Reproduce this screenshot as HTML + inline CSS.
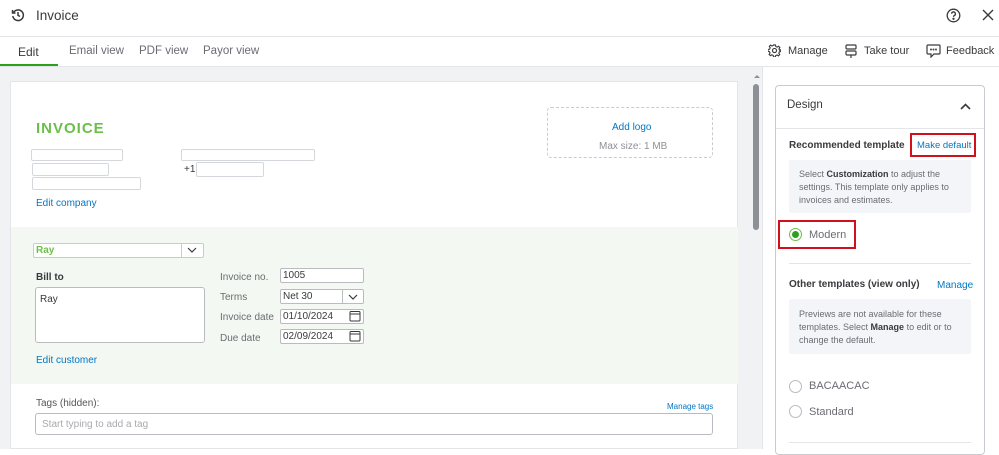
<!DOCTYPE html>
<html><head><style>
*{box-sizing:border-box;margin:0;padding:0}
body{width:999px;height:449px;overflow:hidden;background:#fff;font-family:"Liberation Sans",sans-serif;position:relative;color:#393a3d}
.a{position:absolute}
.in{position:absolute;border:1px solid #d4d7dc;background:#fff;border-radius:2px}
.lbl{position:absolute;font-size:10px;color:#6b6c72}
.link{color:#0077c5}
</style></head><body>
<svg class="a" style="left:11px;top:8px" width="14" height="14" viewBox="0 0 14 14" fill="none" stroke="#393a3d" stroke-width="1.5"><path d="M2.5 4.5A5.3 5.3 0 1 1 1.8 8"/><path d="M1.5 2v3h3"/><path d="M7 4v3.3l2 1.2"/></svg>
<div class="a" style="left:36px;top:8px;font-size:13.5px;color:#393a3d">Invoice</div>
<svg class="a" style="left:946px;top:8px" width="15" height="15" viewBox="0 0 15 15" fill="none" stroke="#393a3d" stroke-width="1.3"><circle cx="7.5" cy="7.5" r="6.3"/><path d="M5.6 5.8a1.9 1.9 0 1 1 2.6 1.8c-.6.3-.7.7-.7 1.3"/><circle cx="7.5" cy="10.8" r=".5" fill="#393a3d"/></svg>
<svg class="a" style="left:982px;top:9px" width="12" height="12" viewBox="0 0 12 12" stroke="#393a3d" stroke-width="1.4"><path d="M1 1l10 10M11 1L1 11"/></svg>
<div class="a" style="left:0;top:36px;width:999px;height:1px;background:#e3e5e8"></div>
<div class="a" style="left:18px;top:45px;font-size:12px;color:#393a3d">Edit</div>
<div class="a" style="left:69px;top:45px;font-size:11.5px;color:#6b6c72">Email view</div>
<div class="a" style="left:139px;top:45px;font-size:11.5px;color:#6b6c72">PDF view</div>
<div class="a" style="left:203px;top:45px;font-size:11.5px;color:#6b6c72">Payor view</div>
<div class="a" style="left:0;top:64px;width:58px;height:2px;background:#2ca01c"></div>
<svg class="a" style="left:768px;top:44px" width="13" height="13" viewBox="0 0 14 14" fill="none" stroke="#393a3d" stroke-width="1.2"><circle cx="7" cy="7" r="2.2"/><path d="M6 1h2l.4 1.7 1.5.7 1.5-1 1.4 1.4-1 1.5.7 1.5L14 6v2l-1.7.4-.7 1.5 1 1.5-1.4 1.4-1.5-1-1.5.7L8 14H6l-.4-1.7-1.5-.7-1.5 1-1.4-1.4 1-1.5-.7-1.5L0 8V6l1.7-.4.7-1.5-1-1.5 1.4-1.4 1.5 1 1.5-.7z"/></svg>
<div class="a" style="left:788px;top:45px;font-size:11px">Manage</div>
<svg class="a" style="left:845px;top:44px" width="12" height="14" viewBox="0 0 12 14" fill="none" stroke="#393a3d" stroke-width="1.2"><rect x="1" y="1" width="10" height="4" rx="1"/><rect x="1" y="7" width="10" height="4" rx="1"/><path d="M6 11v3"/></svg>
<div class="a" style="left:864px;top:45px;font-size:11px">Take tour</div>
<svg class="a" style="left:926px;top:44px" width="15" height="14" viewBox="0 0 15 14" fill="none" stroke="#393a3d" stroke-width="1.2"><path d="M2 1h11a1 1 0 0 1 1 1v7a1 1 0 0 1-1 1H8l-3 3v-3H2a1 1 0 0 1-1-1V2a1 1 0 0 1 1-1z"/><circle cx="5" cy="5.5" r=".4"/><circle cx="7.5" cy="5.5" r=".4"/><circle cx="10" cy="5.5" r=".4"/></svg>
<div class="a" style="left:946px;top:45px;font-size:11px">Feedback</div>
<div class="a" style="left:0;top:66px;width:999px;height:1px;background:#e3e5e8"></div>
<div class="a" style="left:0;top:67px;width:762px;height:382px;background:#f1f2f4"></div>
<div class="a" style="left:10px;top:81px;width:728px;height:368px;background:#fff;border:1px solid #e3e5e8"></div>
<div class="a" style="left:753px;top:84px;width:6px;height:146px;background:#8d9096;border-radius:3px"></div>
<div class="a" style="left:754px;top:75px;width:0;height:0;border-left:3px solid transparent;border-right:3px solid transparent;border-bottom:3px solid #8d9096"></div>
<div class="a" style="left:36px;top:120px;font-size:15px;font-weight:bold;color:#6cbf4a;letter-spacing:1px">INVOICE</div>
<div class="in" style="left:31px;top:149px;width:92px;height:12px"></div>
<div class="in" style="left:32px;top:163px;width:77px;height:13px"></div>
<div class="in" style="left:32px;top:177px;width:109px;height:13px"></div>
<div class="in" style="left:181px;top:149px;width:134px;height:12px"></div>
<div class="a" style="left:184px;top:164px;font-size:10px">+1</div>
<div class="in" style="left:196px;top:162px;width:68px;height:15px"></div>
<div class="a link" style="left:36px;top:198px;font-size:10px">Edit company</div>
<div class="a" style="left:547px;top:107px;width:166px;height:51px;border:1px dashed #c9cbd0;border-radius:4px"></div>
<div class="a link" style="left:612px;top:122px;font-size:10px">Add logo</div>
<div class="a" style="left:599px;top:141px;font-size:10px;color:#8d9096">Max size: 1 MB</div>
<div class="a" style="left:11px;top:227px;width:727px;height:157px;background:#f4f8f2"></div>
<div class="in" style="left:33px;top:243px;width:171px;height:15px;border-color:#c9cbd0"></div>
<div class="a" style="left:36px;top:245px;font-size:10px;font-weight:bold;color:#6cbf4a">Ray</div>
<div class="a" style="left:181px;top:243px;width:1px;height:15px;background:#c9cbd0"></div>
<svg class="a" style="left:187px;top:247px" width="10" height="6" viewBox="0 0 10 6" fill="none" stroke="#393a3d" stroke-width="1.2"><path d="M1 1l4 4 4-4"/></svg>
<div class="a" style="left:36px;top:272px;font-size:10px;font-weight:bold">Bill to</div>
<div class="in" style="left:35px;top:287px;width:170px;height:56px;border-color:#b9bbc0;border-radius:3px"></div>
<div class="a" style="left:40px;top:294px;font-size:10px">Ray</div>
<div class="a link" style="left:36px;top:355px;font-size:10px">Edit customer</div>
<div class="lbl" style="left:220px;top:272px">Invoice no.</div>
<div class="lbl" style="left:220px;top:292px">Terms</div>
<div class="lbl" style="left:220px;top:312px">Invoice date</div>
<div class="lbl" style="left:220px;top:333px">Due date</div>
<div class="in" style="left:280px;top:268px;width:84px;height:15px;border-color:#b9bbc0"></div>
<div class="a" style="left:283px;top:270px;font-size:10px">1005</div>
<div class="in" style="left:280px;top:289px;width:84px;height:15px;border-color:#b9bbc0"></div>
<div class="a" style="left:283px;top:291px;font-size:10px">Net 30</div>
<div class="a" style="left:342px;top:289px;width:1px;height:15px;background:#b9bbc0"></div>
<svg class="a" style="left:348px;top:294px" width="10" height="6" viewBox="0 0 10 6" fill="none" stroke="#393a3d" stroke-width="1.2"><path d="M1 1l4 4 4-4"/></svg>
<div class="in" style="left:280px;top:309px;width:84px;height:15px;border-color:#b9bbc0"></div>
<div class="a" style="left:283px;top:311px;font-size:10px">01/10/2024</div>
<div class="in" style="left:280px;top:329px;width:84px;height:15px;border-color:#b9bbc0"></div>
<div class="a" style="left:283px;top:331px;font-size:10px">02/09/2024</div>
<svg class="a" style="left:349px;top:310px" width="12" height="12" viewBox="0 0 12 12" fill="none" stroke="#393a3d" stroke-width="1"><rect x="1" y="1.5" width="10" height="9.5" rx="1"/><path d="M1 4h10"/></svg>
<svg class="a" style="left:349px;top:330px" width="12" height="12" viewBox="0 0 12 12" fill="none" stroke="#393a3d" stroke-width="1"><rect x="1" y="1.5" width="10" height="9.5" rx="1"/><path d="M1 4h10"/></svg>
<div class="lbl" style="left:36px;top:398px;color:#555">Tags (hidden):</div>
<div class="a link" style="left:667px;top:402px;font-size:8px">Manage tags</div>
<div class="in" style="left:35px;top:413px;width:678px;height:22px;border-color:#b9bbc0;border-radius:3px"></div>
<div class="a" style="left:42px;top:419px;font-size:10px;color:#a8aaae">Start typing to add a tag</div>
<div class="a" style="left:762px;top:67px;width:237px;height:382px;background:#fff;border-left:1px solid #e3e5e8"></div>
<div class="a" style="left:775px;top:85px;width:210px;height:370px;border:1px solid #c9cbd0;border-radius:4px"></div>
<div class="a" style="left:787px;top:99px;font-size:11.5px;color:#393a3d">Design</div>
<svg class="a" style="left:960px;top:103px" width="11" height="7" viewBox="0 0 11 7" fill="none" stroke="#393a3d" stroke-width="1.6"><path d="M1 6l4.5-4.5L10 6"/></svg>
<div class="a" style="left:776px;top:128px;width:208px;height:1px;background:#e3e5e8"></div>
<div class="a" style="left:789px;top:140px;font-size:10px;font-weight:bold;color:#393a3d">Recommended template</div>
<div class="a" style="left:910px;top:133px;width:66px;height:24px;border:2px solid #d0101a"></div>
<div class="a link" style="left:917px;top:140px;font-size:9.5px">Make default</div>
<div class="a" style="left:789px;top:160px;width:182px;height:53px;background:#f4f5f8;border-radius:2px"></div>
<div class="a" style="left:799px;top:168px;font-size:9px;line-height:13px;color:#6b6c72;width:170px">Select <b style="color:#393a3d">Customization</b> to adjust the settings. This template only applies to invoices and estimates.</div>
<div class="a" style="left:778px;top:220px;width:78px;height:29px;border:2px solid #d0101a"></div>
<div class="a" style="left:789px;top:228px;width:13px;height:13px;border:1px solid #6cbf4a;border-radius:50%;background:#fff"></div>
<div class="a" style="left:792px;top:231px;width:7px;height:7px;border-radius:50%;background:#2ca01c"></div>
<div class="a" style="left:809px;top:229px;font-size:11px;color:#6b6c72">Modern</div>
<div class="a" style="left:789px;top:263px;width:182px;height:1px;background:#e3e5e8"></div>
<div class="a" style="left:789px;top:279px;font-size:10px;font-weight:bold">Other templates (view only)</div>
<div class="a link" style="left:937px;top:280px;font-size:10px">Manage</div>
<div class="a" style="left:789px;top:299px;width:182px;height:55px;background:#f4f5f8;border-radius:2px"></div>
<div class="a" style="left:799px;top:308px;font-size:9px;line-height:13px;color:#6b6c72;width:170px">Previews are not available for these templates. Select <b style="color:#393a3d">Manage</b> to edit or to change the default.</div>
<div class="a" style="left:789px;top:380px;width:13px;height:13px;border:1px solid #b9bbc0;border-radius:50%"></div>
<div class="a" style="left:809px;top:380px;font-size:11px;color:#6b6c72">BACAACAC</div>
<div class="a" style="left:789px;top:405px;width:13px;height:13px;border:1px solid #b9bbc0;border-radius:50%"></div>
<div class="a" style="left:809px;top:406px;font-size:11px;color:#6b6c72">Standard</div>
<div class="a" style="left:789px;top:442px;width:182px;height:1px;background:#e3e5e8"></div>
</body></html>
